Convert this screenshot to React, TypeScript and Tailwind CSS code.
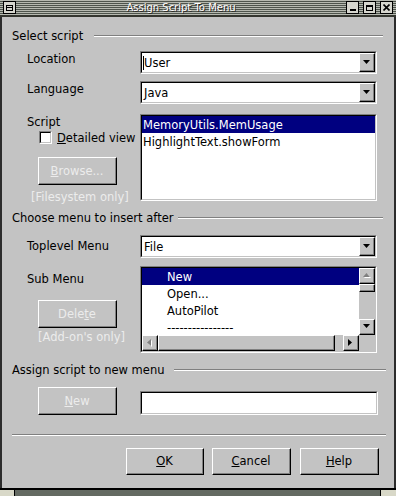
import React from 'react';

type Kids = { className?: string; children?: React.ReactNode };

// raised 3d bevel (buttons, scroll arrows, thumbs)
function Raised({ className = '', children }: Kids) {
  return (
    <div className={`border border-t-white border-l-white border-r-black border-b-black bg-[#c3c3c3] ${className}`}>
      <div className="w-full h-full border-r border-b border-[#808080] flex items-center justify-center">
        {children}
      </div>
    </div>
  );
}

// sunken field (combo, list, text input)
function Sunken({ className = '', children }: Kids) {
  return (
    <div className={`border border-t-[#808080] border-l-[#808080] border-r-white border-b-white ${className}`}>
      <div className="w-full h-full border border-t-black border-l-black border-r-[#c3c3c3] border-b-[#c3c3c3] bg-white overflow-hidden">
        {children}
      </div>
    </div>
  );
}

function Arrow({ dir, disabled = false }: { dir: 'up' | 'down' | 'left' | 'right'; disabled?: boolean }) {
  const pts: Record<string, string> = {
    down: '0,0 7,0 3.5,4',
    up: '0,4 7,4 3.5,0',
    left: '4,0 4,7 0,3.5',
    right: '0,0 0,7 4,3.5',
  };
  const vertical = dir === 'up' || dir === 'down';
  const w = vertical ? 8 : 5;
  const h = vertical ? 5 : 8;
  return (
    <svg width={w} height={h} viewBox={`0 0 ${w} ${h}`}>
      {disabled && <polygon points={pts[dir]} fill="#ffffff" transform="translate(1,1)" />}
      <polygon points={pts[dir]} fill={disabled ? '#808080' : '#000000'} />
    </svg>
  );
}

function Combo({ value, caret = false }: { value: string; caret?: boolean }) {
  return (
    <Sunken className="w-[237px] h-[23px]">
      <div className="flex h-full items-center">
        <div className="flex-1 flex items-center pl-[1px]">
          {caret && <span className="inline-block w-[1px] h-[14px] bg-black mr-[-1px]" />}
          <span className="pl-[1px]">{value}</span>
        </div>
        <Raised className="w-[16px] h-full">
          <Arrow dir="down" />
        </Raised>
      </div>
    </Sunken>
  );
}

function Header({ title, gap, right }: { title: string; gap: string; right: string }) {
  return (
    <div className="flex items-center h-[14px]">
      <span className="leading-[14px]">{title}</span>
      <div className={`flex-1 h-[2px] border-t border-t-[#808080] border-b border-b-white ${gap} ${right}`} />
    </div>
  );
}

function Btn({ label, u, rest, disabled = false, className = '' }: { label?: string; u: string; rest: string; disabled?: boolean; className?: string }) {
  return (
    <Raised className={className}>
      <span className={disabled ? 'text-[#ececec]' : 'text-black'}>
        {label}
        <u>{u}</u>
        {rest}
      </span>
    </Raised>
  );
}

function TitleButton({ children }: Kids) {
  return (
    <div className="w-[13px] h-[13px] border border-black bg-[#d6d6ce] flex items-center justify-center">
      {children}
    </div>
  );
}

const subItems = ['New', 'Open...', 'AutoPilot', '----------------'];

export default function App() {
  return (
    <div className="w-[396px] h-[496px] flex flex-col bg-[#c3c3c3] overflow-hidden font-['DejaVu_Sans',sans-serif] text-[11.5px] leading-[14px] text-black">
      {/* title bar */}
      <div className="h-[17px] flex items-center border-b-2 border-[#34362f] bg-[repeating-linear-gradient(to_bottom,#b6b9b0_0px,#b6b9b0_1px,#4e544c_1px,#4e544c_2px)] px-[3px]">
        <TitleButton>
          <div className="w-[7px] h-[6px] border border-black flex items-center">
            <div className="w-full h-[1px] bg-black" />
          </div>
        </TitleButton>
        <div className="flex-1 text-center text-white text-[10px] leading-[12px] [text-shadow:1px_1px_0_#2a2a26]">
          Assign Script To Menu
        </div>
        <div className="flex gap-[4px]">
          <TitleButton>
            <div className="w-[6px] h-[2px] bg-black mt-[5px]" />
          </TitleButton>
          <TitleButton>
            <div className="w-[7px] h-[6px] border border-black border-t-2" />
          </TitleButton>
          <TitleButton>
            <svg width="7" height="7" viewBox="0 0 7 7">
              <path d="M0.5 0.5 L6.5 6.5 M6.5 0.5 L0.5 6.5" stroke="black" strokeWidth="1.6" />
            </svg>
          </TitleButton>
        </div>
      </div>

      {/* dialog body */}
      <div className="flex-1 flex flex-col border-l-2 border-r-2 border-[#2c2c2c] pl-[10px]">
        <div className="mt-[12px]">
          <Header title="Select script" gap="ml-[11px]" right="mr-[11px]" />
        </div>

        <div className="flex mt-[8px] ml-[15px]">
          <div className="w-[113px] pt-[1px]">Location</div>
          <Combo value="User" caret />
        </div>

        <div className="flex mt-[7px] ml-[15px]">
          <div className="w-[113px] pt-[1px]">Language</div>
          <Combo value="Java" />
        </div>

        <div className="flex mt-[10px] ml-[15px]">
          <div className="w-[113px] flex flex-col">
            <div className="pt-[1px]">Script</div>
            <div className="flex items-start mt-[2px] ml-[12px]">
              <Sunken className="w-[13px] h-[13px]" />
              <span className="ml-[5px]">
                <u>D</u>etailed view
              </span>
            </div>
            <Btn disabled u="B" rest="rowse..." className="w-[79px] h-[28px] mt-[12px] ml-[11px]" />
            <div className="mt-[5px] ml-[4px] text-[#ececec]">[Filesystem only]</div>
          </div>
          <Sunken className="w-[237px] h-[87px]">
            <div className="h-[17px] flex items-center bg-[#000080] text-white pl-[1px]">MemoryUtils.MemUsage</div>
            <div className="h-[17px] flex items-center pl-[1px]">HighlightText.showForm</div>
          </Sunken>
        </div>

        <div className="mt-[7px]">
          <Header title="Choose menu to insert after" gap="ml-[5px]" right="mr-[11px]" />
        </div>

        <div className="flex mt-[10px] ml-[15px]">
          <div className="w-[113px] pt-[4px]">Toplevel Menu</div>
          <Combo value="File" />
        </div>

        <div className="flex mt-[8px] ml-[15px]">
          <div className="w-[113px] flex flex-col">
            <div className="pt-[6px]">Sub Menu</div>
            <Btn disabled label="Dele" u="t" rest="e" className="w-[79px] h-[28px] mt-[14px] ml-[11px]" />
            <div className="mt-[2px] ml-[11px] text-[#ececec]">[Add-on's only]</div>
          </div>
          <Sunken className="w-[237px] h-[87px]">
            <div className="grid grid-cols-[1fr_16px] grid-rows-[1fr_16px] h-full bg-[#c3c3c3]">
              <div className="bg-white overflow-hidden">
                {subItems.map((item, i) => (
                  <div
                    key={item}
                    className={`h-[17px] flex items-center pl-[25px] ${i === 0 ? 'bg-[#000080] text-white' : ''}`}
                  >
                    {item}
                  </div>
                ))}
              </div>
              <div className="flex flex-col">
                <Raised className="h-[16px]">
                  <Arrow dir="up" disabled />
                </Raised>
                <Raised className="h-[8px]" />
                <div className="flex-1" />
                <Raised className="h-[16px]">
                  <Arrow dir="down" />
                </Raised>
              </div>
              <div className="flex">
                <Raised className="w-[16px]">
                  <Arrow dir="left" disabled />
                </Raised>
                <Raised className="w-[177px]" />
                <div className="flex-1" />
                <Raised className="w-[16px]">
                  <Arrow dir="right" />
                </Raised>
              </div>
              <div />
            </div>
          </Sunken>
        </div>

        <div className="mt-[10px]">
          <Header title="Assign script to new menu" gap="ml-[10px]" right="mr-[8px]" />
        </div>

        <div className="flex mt-[10px] ml-[15px]">
          <div className="w-[113px]">
            <Btn disabled u="N" rest="ew" className="w-[79px] h-[28px] ml-[11px]" />
          </div>
          <Sunken className="w-[238px] h-[24px] mt-[4px]" />
        </div>

        <div className="mt-[19px] mr-[8px] h-[2px] border-t border-t-[#808080] border-b border-b-white" />

        <div className="flex justify-end mt-[12px] mr-[15px]">
          <Btn u="O" rest="K" className="w-[78px] h-[27px]" />
          <Btn u="C" rest="ancel" className="w-[79px] h-[27px] ml-[8px]" />
          <Btn u="H" rest="elp" className="w-[79px] h-[27px] ml-[9px]" />
        </div>
      </div>

      {/* bottom frame */}
      <div className="h-[8px] flex border-t-2 border-black bg-[#2c2c2c]">
        <div className="w-[15px] bg-[#d8d8c8] border-r border-black" />
        <div className="flex-1 bg-[#646a62]" />
        <div className="w-[16px] bg-[#d8d8c8] border-l border-black" />
      </div>
    </div>
  );
}
